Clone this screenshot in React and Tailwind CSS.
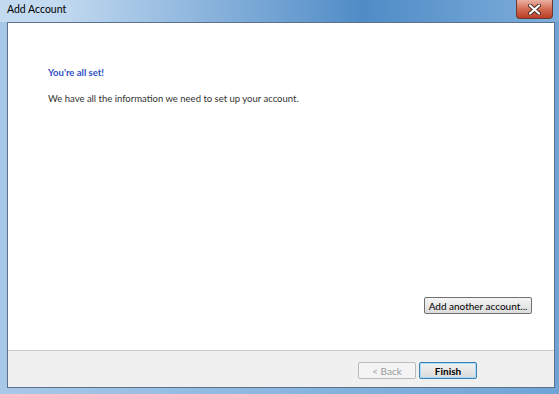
import React from 'react';

const font = "font-['Lato','Noto_Sans',sans-serif]";

const CloseGlyph = () => (
    <svg width="13" height="11" viewBox="0 0 13 11">
        <path d="M2 1.5 L11 9.5 M11 1.5 L2 9.5" stroke="#4a2a22" strokeWidth="4" strokeLinecap="round" />
        <path d="M2 1.5 L11 9.5 M11 1.5 L2 9.5" stroke="#ffffff" strokeWidth="2.2" strokeLinecap="round" />
    </svg>
);

const WinButton = ({ children, className = '' }) => (
    <button
        className={`h-[17px] rounded-[2px] border text-[10px] leading-none whitespace-nowrap flex items-center justify-center ${className}`}
    >
        {children}
    </button>
);

const App = () => {
    return (
        <div className={`w-[559px] h-[394px] flex flex-col overflow-hidden bg-gradient-to-r from-[#a8c8e8] via-[#8ab6df] to-[#6fa3d6] ${font}`}>
            {/* title bar */}
            <div className="h-[22px] flex items-start bg-gradient-to-r from-[#c3daf0] from-10% via-[#4f8cc6] via-65% to-[#7eaedb] pl-[7px] pr-[6px]">
                <span className="mt-[4px] text-[10.5px] leading-none text-black">Add Account</span>
                <div className="ml-auto w-[37px] h-[19px] flex items-center justify-center rounded-b-[4px] border border-t-0 border-[#6a3a30] bg-gradient-to-b from-[#eab0a2] via-[#d36c54] to-[#bb3c24]">
                    <CloseGlyph />
                </div>
            </div>

            {/* client area */}
            <div className="flex-1 ml-[7px] mr-[4px] mb-[6px] border border-[#5c7189] bg-white flex flex-col">
                <div className="flex-1 flex flex-col pl-[40px] pr-[22px] pt-[43px] pb-[36px]">
                    <div className="text-[9.5px] font-bold text-[#2f4fc4] leading-[14px]">You're all set!</div>
                    <div className="mt-[12px] text-[9.5px] text-[#333333] leading-[14px]">
                        We have all the information we need to set up your account.
                    </div>
                    <div className="mt-auto flex justify-end">
                        <WinButton className="w-[108px] border-[#707070] bg-gradient-to-b from-[#f4f4f4] to-[#dcdcdc] text-black">
                            Add another account...
                        </WinButton>
                    </div>
                </div>
                <div className="h-[37px] border-t border-[#cdcdcd] bg-[#f0f0f0] flex items-start justify-end pt-[11px] pr-[77px] gap-[3px]">
                    <WinButton className="w-[58px] border-[#bcbcbc] bg-[#f4f4f4] text-[#9a9a9a]">
                        &lt; Back
                    </WinButton>
                    <WinButton className="w-[58px] border-[#3c7fb1] bg-gradient-to-b from-[#f2f2f2] to-[#dadada] text-black font-bold shadow-[inset_0_0_0_1px_#a9dcf6]">
                        Finish
                    </WinButton>
                </div>
            </div>
        </div>
    );
};

export default App;
